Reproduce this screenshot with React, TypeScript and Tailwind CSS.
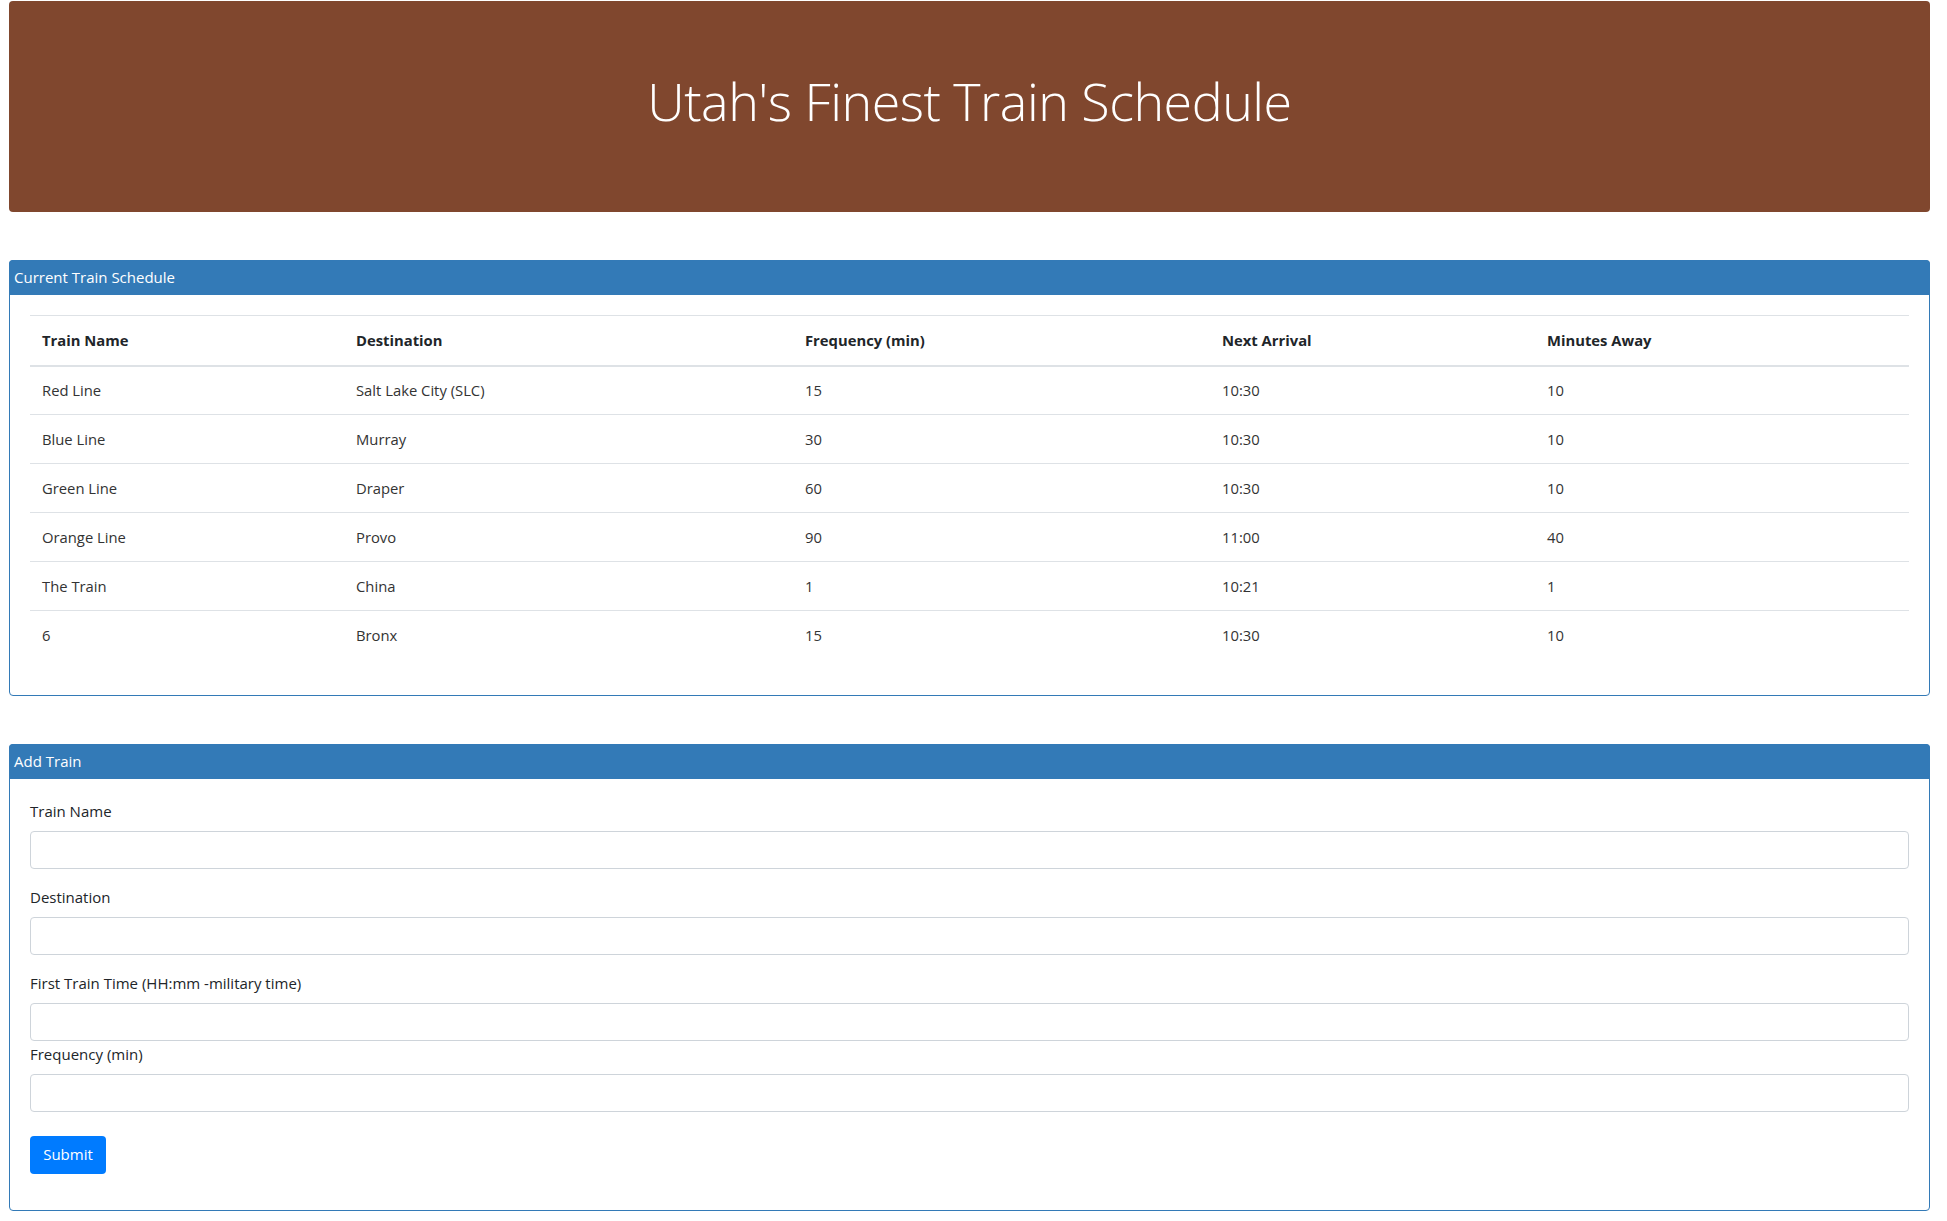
import React from "react";

const rows = [
  ["Red Line", "Salt Lake City (SLC)", "15", "10:30", "10"],
  ["Blue Line", "Murray", "30", "10:30", "10"],
  ["Green Line", "Draper", "60", "10:30", "10"],
  ["Orange Line", "Provo", "90", "11:00", "40"],
  ["The Train", "China", "1", "10:21", "1"],
  ["6", "Bronx", "15", "10:30", "10"],
];

const heads = ["Train Name", "Destination", "Frequency (min)", "Next Arrival", "Minutes Away"];
const widths = ["w-[314px]", "w-[449px]", "w-[417px]", "w-[325px]", "w-[374px]"];

function Field({ label, mb }: { label: string; mb: boolean }) {
  return (
    <div className={mb ? "mb-[16px]" : ""}>
      <label className="block h-[24px] leading-[24px] mb-[8px] text-[15px] text-[#212529]">{label}</label>
      <input
        type="text"
        className="block w-full h-[38px] rounded-[4px] border border-[#ced4da] bg-white px-3 outline-none"
      />
    </div>
  );
}

export default function App() {
  return (
    <div
      className="bg-white min-h-[1221px] pt-[1px] pl-[9px] w-[1930px] text-[#212529]"
      style={{ fontFamily: '"Open Sans", "Noto Sans", Arial, sans-serif' }}
    >
      <div className="h-[211px] w-full rounded-[4px] bg-[#80472e] flex items-center justify-center">
        <h1 className="text-white text-[52px] font-light leading-none -mt-[12px] tracking-[-0.5px]">
          Utah's Finest Train Schedule
        </h1>
      </div>

      <div className="mt-[48px] rounded-[4px] border border-[#337ab7]">
        <div className="h-[35px] -mx-px -mt-px bg-[#337ab7] rounded-t-[4px] px-[5px] flex items-center text-white text-[15px]">
          Current Train Schedule
        </div>
        <div className="p-[20px]">
          <table className="w-full border-collapse mb-[15px] table-fixed text-[14.8px]">
            <thead>
              <tr>
                {heads.map((h, i) => (
                  <th
                    key={h}
                    className={`${widths[i]} text-left font-bold px-[12px] h-[50px] border-t border-t-[#dee2e6] border-b-2 border-b-[#dee2e6] text-[#212529]`}
                  >
                    {h}
                  </th>
                ))}
              </tr>
            </thead>
            <tbody>
              {rows.map((r, ri) => (
                <tr key={ri}>
                  {r.map((c, ci) => (
                    <td
                      key={ci}
                      className={`px-[12px] h-[49px] text-left ${ri === 0 ? "" : "border-t border-t-[#dee2e6]"} text-[#333]`}
                    >
                      {c}
                    </td>
                  ))}
                </tr>
              ))}
            </tbody>
          </table>
        </div>
      </div>

      <div className="mt-[48px] rounded-[4px] border border-[#337ab7]">
        <div className="h-[35px] -mx-px -mt-px bg-[#337ab7] rounded-t-[4px] px-[5px] flex items-center text-white text-[15px]">
          Add Train
        </div>
        <div className="px-[20px] pt-[20px] pb-[36px]">
          <Field label="Train Name" mb />
          <Field label="Destination" mb />
          <Field label="First Train Time (HH:mm -military time)" mb={false} />
          <div className="mt-[1px]">
            <Field label="Frequency (min)" mb={false} />
          </div>
          <button className="mt-[24px] h-[38px] w-[76px] rounded-[4px] bg-[#007bff] text-white text-[15px]">
            Submit
          </button>
        </div>
      </div>
    </div>
  );
}
